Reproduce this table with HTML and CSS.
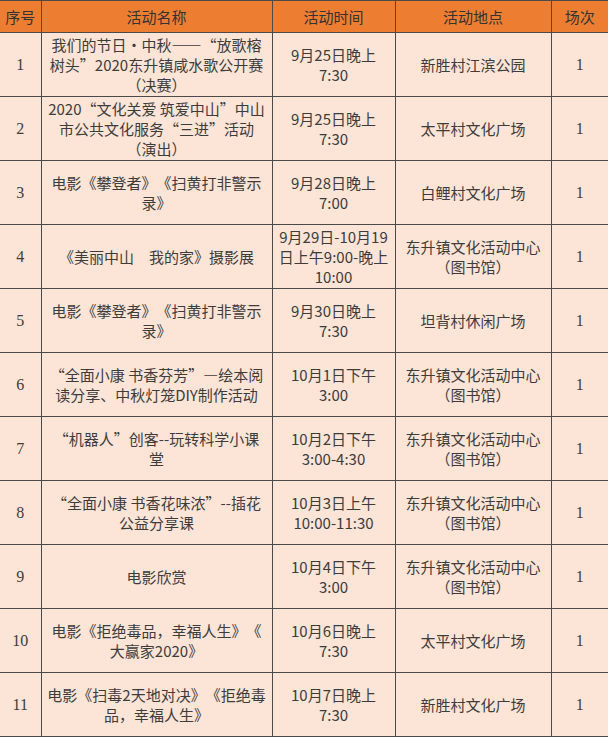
FILE: index.html
```html
<!DOCTYPE html>
<html lang="zh-CN">
<head>
<meta charset="utf-8">
<title>活动安排</title>
<link rel="stylesheet" href="styles.css">
</head>
<body>
<table class="schedule">
  <colgroup>
    <col class="c-no"><col class="c-name"><col class="c-time"><col class="c-place"><col class="c-count">
  </colgroup>
  <thead>
    <tr><th>序号</th><th>活动名称</th><th>活动时间</th><th>活动地点</th><th>场次</th></tr>
  </thead>
  <tbody>
    <tr><td class="num">1</td><td>我们的节日·中秋——“放歌榕<br>树头”2020东升镇咸水歌公开赛<br>（决赛）</td><td>9月25日晚上<br>7:30</td><td>新胜村江滨公园</td><td class="num">1</td></tr>
    <tr><td class="num">2</td><td>2020“文化关爱 筑爱中山”中山<br>市公共文化服务“三进”活动<br>（演出）</td><td>9月25日晚上<br>7:30</td><td>太平村文化广场</td><td class="num">1</td></tr>
    <tr><td class="num">3</td><td>电影《攀登者》《扫黄打非警示<br>录》</td><td>9月28日晚上<br>7:00</td><td>白鲤村文化广场</td><td class="num">1</td></tr>
    <tr><td class="num">4</td><td>《美丽中山　我的家》摄影展</td><td>9月29日-10月19<br>日上午9:00-晚上<br>10:00</td><td>东升镇文化活动中心<br>（图书馆）</td><td class="num">1</td></tr>
    <tr><td class="num">5</td><td>电影《攀登者》《扫黄打非警示<br>录》</td><td>9月30日晚上<br>7:30</td><td>坦背村休闲广场</td><td class="num">1</td></tr>
    <tr><td class="num">6</td><td>“全面小康 书香芬芳”—绘本阅<br>读分享、中秋灯笼DIY制作活动</td><td>10月1日下午<br>3:00</td><td>东升镇文化活动中心<br>（图书馆）</td><td class="num">1</td></tr>
    <tr><td class="num">7</td><td>“机器人”创客--玩转科学小课<br>堂</td><td>10月2日下午<br>3:00-4:30</td><td>东升镇文化活动中心<br>（图书馆）</td><td class="num">1</td></tr>
    <tr><td class="num">8</td><td>“全面小康 书香花味浓”--插花<br>公益分享课</td><td>10月3日上午<br>10:00-11:30</td><td>东升镇文化活动中心<br>（图书馆）</td><td class="num">1</td></tr>
    <tr><td class="num">9</td><td>电影欣赏</td><td>10月4日下午<br>3:00</td><td>东升镇文化活动中心<br>（图书馆）</td><td class="num">1</td></tr>
    <tr><td class="num">10</td><td>电影《拒绝毒品，幸福人生》《<br>大赢家2020》</td><td>10月6日晚上<br>7:30</td><td>太平村文化广场</td><td class="num">1</td></tr>
    <tr><td class="num">11</td><td>电影《扫毒2天地对决》《拒绝毒<br>品，幸福人生》</td><td>10月7日晚上<br>7:30</td><td>新胜村文化广场</td><td class="num">1</td></tr>
  </tbody>
</table>
</body>
</html>
```
FILE: styles.css
```css
html, body {
  margin: 0;
  padding: 0;
  background: #fce4d6;
}
.schedule {
  width: 608px;
  border-collapse: collapse;
  table-layout: fixed;
  font-family: "Noto Sans CJK SC", "Noto Sans", sans-serif;
  font-size: 15px;
  line-height: 20px;
  color: #3c3c3c;
  text-spacing-trim: space-all;
}
.c-no { width: 41px; }
.c-name { width: 231px; }
.c-time { width: 123px; }
.c-place { width: 156px; }
.c-count { width: 57px; }
.schedule th, .schedule td {
  border: 1px solid #4a4a4a;
  text-align: center;
  vertical-align: middle;
  padding: 0 1px;
  font-weight: normal;
  white-space: nowrap;
}
.schedule tr > :first-child { border-left: none; }
.schedule tr > :last-child { border-right: none; }
.schedule th {
  background: #ed7d31;
  height: 31px;
  color: #333;
}
.schedule td {
  background: #fce4d6;
  height: 63px;
}
.schedule td.num {
  font-family: "Liberation Serif", serif;
  font-size: 16px;
  padding: 0;
}
```
